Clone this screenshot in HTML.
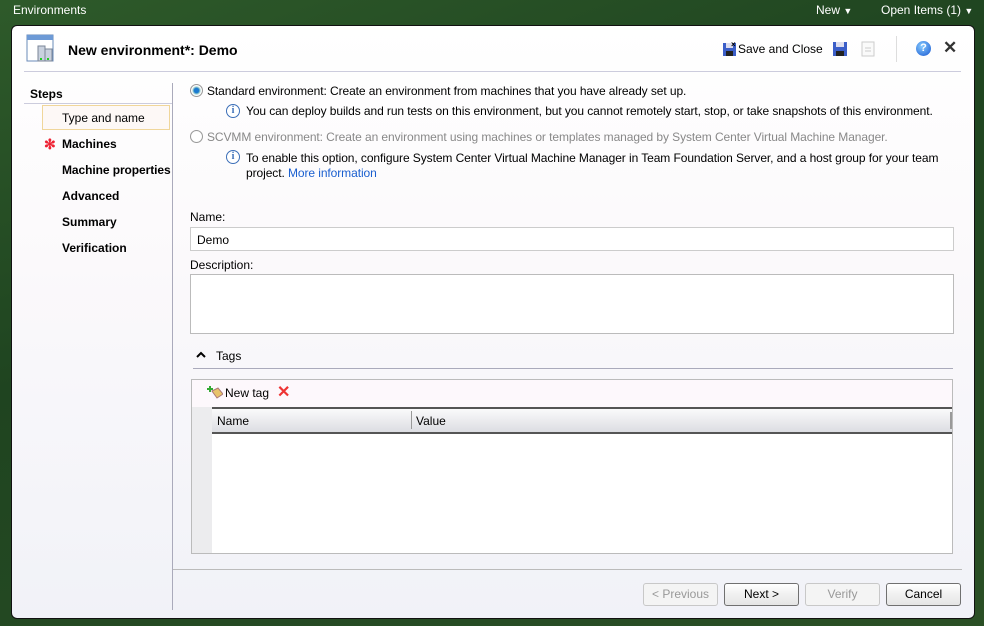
<!DOCTYPE html>
<html><head><style>
*{margin:0;padding:0;box-sizing:border-box}
body{width:984px;height:626px;overflow:hidden;background:linear-gradient(160deg,#2e5a2a 0%,#1f4420 40%,#2a4f25 100%);font-family:"Liberation Sans",sans-serif;font-size:12px;color:#000;position:relative}
.a{position:absolute}
.top{color:#fff;font-size:12px}
.win{left:11px;top:25px;width:964px;height:594px;border:1px solid #111;border-radius:6px;background:linear-gradient(180deg,#fff 0%,#fbf9fb 40%,#f1f2f8 100%);overflow:hidden}
.b{font-weight:bold}
.step{left:50px;font-weight:bold;font-size:12px}
.info{width:14px;height:14px;border:1px solid #3c6fb8;border-radius:50%;color:#3c6fb8;font:bold 10px "Liberation Serif",serif;text-align:center;line-height:12px;background:#fff}
.radio{width:13px;height:13px;border-radius:50%;border:1px solid #999;background:radial-gradient(circle,#fff 60%,#ddd)}
.btn{height:23px;border:1px solid #707070;border-radius:3px;background:linear-gradient(#fff,#f0f0f0 50%,#e5e5e5);text-align:center;line-height:21px}
.btn.d{border-color:#c8c8c8;color:#999;background:#f4f4f4}
.t{letter-spacing:-0.08px}
</style></head><body>
<div class="a top" style="left:13px;top:3px">Environments</div>
<div class="a top" style="left:816px;top:3px">New <span style="font-size:9px">▼</span></div>
<div class="a top" style="left:881px;top:3px">Open Items (1) <span style="font-size:9px">▼</span></div>

<div class="a win">
 <svg class="a" style="left:14px;top:8px" width="30" height="30"><rect x="1" y="1" width="26" height="26" fill="#fff" stroke="#6a8bb8"/><rect x="1" y="1" width="26" height="5" fill="#6d9ad6"/><rect x="12" y="12" width="7" height="15" fill="#c9d1de" stroke="#7a8597"/><rect x="19" y="15" width="7" height="12" fill="#c9d1de" stroke="#7a8597"/><rect x="14" y="24" width="2" height="2" fill="#2c2"/><rect x="21" y="24" width="2" height="2" fill="#2c2"/></svg>
 <div class="a b" style="left:56px;top:16px;font-size:14px">New environment*: Demo</div>
 <svg class="a" style="left:711px;top:15px" width="15" height="15"><rect x="0" y="2" width="13" height="13" fill="#3b5ec8"/><rect x="3" y="2" width="7" height="5" fill="#dde"/><rect x="3" y="10" width="7" height="5" fill="#222"/><text x="8" y="6" font-size="8" font-weight="bold">×</text></svg>
 <div class="a" style="left:726px;top:16px">Save and Close</div>
 <svg class="a" style="left:821px;top:16px" width="14" height="14"><rect x="0" y="0" width="14" height="14" fill="#3b5ec8"/><rect x="3" y="0" width="8" height="5" fill="#dde"/><rect x="3" y="9" width="8" height="5" fill="#222"/></svg>
 <svg class="a" style="left:849px;top:15px" width="14" height="16"><rect x="1" y="1" width="12" height="14" fill="#fafafa" stroke="#ccc"/><path d="M4 7h6M4 10h6" stroke="#ccc"/></svg>
 <div class="a" style="left:884px;top:10px;width:1px;height:26px;background:#ddd"></div>
 <div class="a" style="left:904px;top:15px;width:15px;height:15px;border-radius:50%;background:radial-gradient(circle at 40% 35%,#8cf,#1555d0);color:#fff;font:bold 11px sans-serif;text-align:center;line-height:15px">?</div>
 <div class="a b" style="left:931px;top:12px;font-size:17px;color:#333">✕</div>
 <div class="a" style="left:12px;top:45px;width:937px;height:1px;background:#ccd"></div>

 <div class="a b" style="left:18px;top:61px">Steps</div>
 <div class="a" style="left:12px;top:77px;width:148px;height:1px;background:#ccd"></div>
 <div class="a" style="left:30px;top:79px;width:128px;height:25px;border:1px solid #f0d69a;background:#fdf8f6;padding:5px 0 0 19px">Type and name</div>
 <div class="a" style="left:32px;top:110px;color:#e23;font-weight:bold;font-size:14px">✻</div>
 <div class="a step" style="top:111px">Machines</div>
 <div class="a step t" style="top:137px">Machine properties</div>
 <div class="a step" style="top:163px">Advanced</div>
 <div class="a step" style="top:189px">Summary</div>
 <div class="a step" style="top:215px">Verification</div>
 <div class="a" style="left:160px;top:57px;width:1px;height:527px;background:#aab"></div>

 <div class="a radio" style="left:178px;top:58px;background:radial-gradient(circle,#1b7ad0 30%,#9cc 45%,#fff 60%,#ddd)"></div>
 <div class="a t" style="left:195px;top:58px">Standard environment: Create an environment from machines that you have already set up.</div>
 <div class="a info" style="left:214px;top:78px">i</div>
 <div class="a t" style="left:234px;top:78px">You can deploy builds and run tests on this environment, but you cannot remotely start, stop, or take snapshots of this environment.</div>
 <div class="a radio" style="left:178px;top:104px"></div>
 <div class="a t" style="left:195px;top:104px;color:#888">SCVMM environment: Create an environment using machines or templates managed by System Center Virtual Machine Manager.</div>
 <div class="a info" style="left:214px;top:124px">i</div>
 <div class="a t" style="left:234px;top:125px;width:710px;line-height:15px">To enable this option, configure System Center Virtual Machine Manager in Team Foundation Server, and a host group for your team project. <span style="color:#1a5fcf">More information</span></div>

 <div class="a" style="left:178px;top:184px">Name:</div>
 <div class="a" style="left:178px;top:201px;width:764px;height:24px;border:1px solid #ccc;background:#fff;padding:5px 0 0 6px">Demo</div>
 <div class="a" style="left:178px;top:232px">Description:</div>
 <div class="a" style="left:178px;top:248px;width:764px;height:60px;border:1px solid #bbb;background:#fff"></div>

 <svg class="a" style="left:184px;top:325px" width="10" height="8"><path d="M1 6l4-4 4 4" stroke="#000" stroke-width="2" fill="none"/></svg>
 <div class="a" style="left:204px;top:323px">Tags</div>
 <div class="a" style="left:181px;top:342px;width:760px;height:1px;background:#aab"></div>
 <div class="a" style="left:179px;top:353px;width:762px;height:175px;border:1px solid #bbb;background:#fff"></div>
 <div class="a" style="left:180px;top:354px;width:760px;height:27px;background:#fdf8fc"></div>
 <svg class="a" style="left:195px;top:359px" width="16" height="14"><path d="M5 6l6-3 5 6-6 4z" fill="#e8c36a" stroke="#a77"/><path d="M0 4h6M3 1v6" stroke="#3a3" stroke-width="2"/></svg>
 <div class="a" style="left:213px;top:360px">New tag</div>
 <div class="a" style="left:265px;top:356px;color:#e33;font-size:16px;font-weight:bold">✕</div>
 <div class="a" style="left:180px;top:381px;width:20px;height:146px;background:#ececee"></div>
 <div class="a" style="left:200px;top:381px;width:740px;height:27px;border-top:2px solid #555;border-bottom:2px solid #555;background:linear-gradient(#fafafb,#dcdde2)"></div>
 <div class="a" style="left:205px;top:388px">Name</div>
 <div class="a" style="left:399px;top:385px;width:1px;height:18px;background:#999"></div>
 <div class="a" style="left:404px;top:388px">Value</div>
 <div class="a" style="left:938px;top:386px;width:2px;height:17px;background:#999"></div>

 <div class="a" style="left:161px;top:543px;width:789px;height:1px;background:#bbb"></div>
 <div class="a btn d" style="left:631px;top:557px;width:75px">&lt; Previous</div>
 <div class="a btn" style="left:712px;top:557px;width:75px">Next &gt;</div>
 <div class="a btn d" style="left:793px;top:557px;width:75px">Verify</div>
 <div class="a btn" style="left:874px;top:557px;width:75px">Cancel</div>
</div>
</body></html>
